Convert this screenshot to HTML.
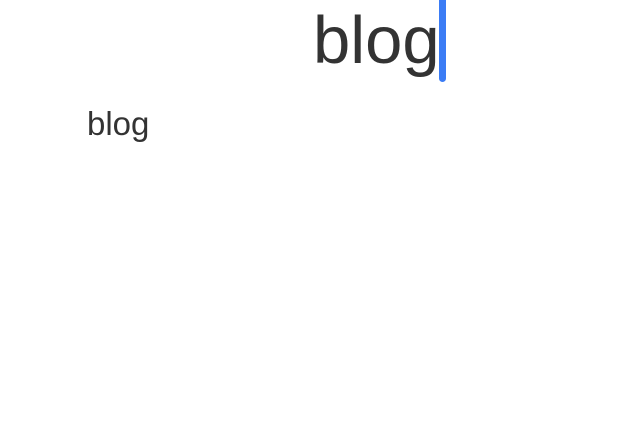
<!DOCTYPE html>
<html><head><style>
html,body{margin:0;padding:0;background:#fff;width:636px;height:432px;overflow:hidden;font-family:"Liberation Sans",sans-serif;color:#333}
.big{position:absolute;left:313px;top:41px;font-size:67px;line-height:0}
.cur{position:absolute;left:439px;top:-4px;width:7px;height:86px;background:#3b7cf5;border-radius:4px}
.small{position:absolute;left:87px;top:124px;font-size:33px;line-height:0}
</style></head><body>
<div class="big">blog</div>
<div class="cur"></div>
<div class="small">blog</div>
</body></html>
